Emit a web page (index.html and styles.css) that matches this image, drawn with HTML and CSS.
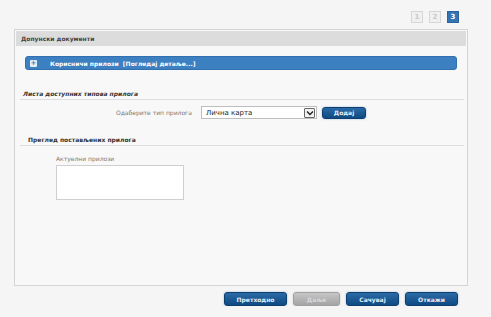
FILE: index.html
```html
<!DOCTYPE html>
<html lang="sr">
<head>
  <meta charset="UTF-8">
  <meta name="viewport" content="width=device-width, initial-scale=1.0">
  <title>Допунски документи</title>
  <link rel="stylesheet" href="styles.css">
</head>
<body>

  <div class="steps">
    <span class="step">1</span>
    <span class="step">2</span>
    <span class="step active">3</span>
  </div>

  <div class="panel">
    <div class="panel-header">Допунски документи</div>

    <div class="accordion">
      <span class="plus">+</span>
      <span class="accordion-title">Корисничи прилози&nbsp;&nbsp;[Погледај детаље...]</span>
    </div>

    <div class="section first">
      <div class="section-title italic">Листа доступних типова прилога</div>
      <div class="form-row">
        <label class="form-label">Одаберите тип прилога</label>
        <div class="select">
          <span class="select-value">Лична карта</span>
          <span class="select-arrow">
            <svg width="8" height="6" viewBox="0 0 8 6"><path d="M1 1.5 L4 4.5 L7 1.5" fill="none" stroke="#222" stroke-width="1.4"/></svg>
          </span>
        </div>
        <button class="btn small">Додај</button>
      </div>
    </div>

    <div class="section second">
      <div class="section-title">Преглед постављених прилога</div>
      <div class="attached">
        <div class="attached-label">Актуелни прилози</div>
        <div class="attached-box"></div>
      </div>
    </div>
  </div>

  <div class="footer">
    <button class="btn wide">Претходно</button>
    <button class="btn disabled">Даље</button>
    <button class="btn">Сачувај</button>
    <button class="btn">Откажи</button>
  </div>

</body>
</html>
```

FILE: styles.css
```css
body {
  margin: 0;
  background: #f5f5f5;
  font-family: 'DejaVu Sans', Verdana, sans-serif;
  font-size: 6px;
  color: #333;
}

.steps {
  display: flex;
  justify-content: flex-end;
  gap: 6px;
  padding: 11px 32px 0 0;
  height: 12px;
}

.step {
  width: 10px;
  height: 10px;
  border: 1px solid #d6d6d6;
  background: #f0f0f0;
  color: #c8c8c8;
  font-size: 7px;
  font-weight: bold;
  display: flex;
  align-items: center;
  justify-content: center;
}

.step.active {
  background: #3474b3;
  border-color: #2a64a0;
  color: #fff;
}

.panel {
  margin: 6px 23px 0 14px;
  height: 253px;
  border: 1px solid #d4d4d4;
  background: #f8f8f8;
  padding: 1px;
}

.panel-header {
  height: 15px;
  line-height: 15px;
  background: #dcdcdc;
  padding-left: 5px;
  font-weight: bold;
  color: #444;
}

.accordion {
  margin: 10px 9px 0 9px;
  height: 12px;
  background: #3d80c2;
  border: 1px solid #316fae;
  border-radius: 3px;
  display: flex;
  align-items: center;
  color: #fff;
  font-weight: bold;
}

.plus {
  width: 7px;
  height: 7px;
  margin-left: 4px;
  background: #e8eef6;
  color: #3d80c2;
  border-radius: 1px;
  font-size: 7px;
  line-height: 7px;
  text-align: center;
}

.accordion-title {
  margin-left: 13px;
}

.section {
  margin: 0 2px 0 4px;
}

.section.first {
  margin-top: 20px;
}

.section.second {
  margin-top: 17px;
}

.section-title {
  font-weight: bold;
  color: #333;
  padding: 0 0 2px 3px;
  border-bottom: 1px solid #dedede;
}

.section-title.italic {
  font-style: italic;
}

.second .section-title {
  padding-left: 8px;
}

.form-row {
  display: flex;
  align-items: center;
  margin-top: 6px;
  height: 13px;
}

.form-label {
  margin-left: 96px;
  width: 85px;
  color: #777;
}

.select {
  width: 114px;
  height: 11px;
  border: 1px solid #bdbdbd;
  background: #fff;
  display: flex;
  align-items: center;
  justify-content: space-between;
  font-size: 7px;
  color: #222;
}

.select-value {
  padding-left: 4px;
}

.select-arrow {
  width: 9px;
  height: 8px;
  margin-right: 1px;
  border: 1px solid #666;
  border-radius: 1px;
  background: #f2f2f2;
  display: flex;
  align-items: center;
  justify-content: center;
}

.btn {
  font-family: 'DejaVu Sans', Verdana, sans-serif;
  font-size: 6px;
  font-weight: bold;
  color: #e6eef8;
  border: 1px solid #0c3f6f;
  border-radius: 3px;
  background: linear-gradient(#2a6aa6, #0f4a82);
  height: 14px;
  width: 53px;
  padding: 0;
  box-shadow: 0 0 2px rgba(60, 120, 190, 0.5);
}

.btn.small {
  width: 44px;
  height: 12px;
  margin-left: 5px;
}

.btn.wide {
  width: 63px;
}

.btn.disabled {
  width: 47px;
  background: linear-gradient(#c6c6c6, #a4a4a4);
  border-color: #a0a0a0;
  color: #d8d8d8;
  box-shadow: 0 0 2px rgba(0, 0, 0, 0.2);
}

.attached {
  margin: 9px 0 0 36px;
}

.attached-label {
  color: #777;
  margin-bottom: 3px;
}

.attached-box {
  width: 126px;
  height: 33px;
  border: 1px solid #cfcfcf;
  background: #fff;
}

.footer {
  display: flex;
  justify-content: flex-end;
  gap: 6px;
  padding: 6px 33px 0 0;
}
```
